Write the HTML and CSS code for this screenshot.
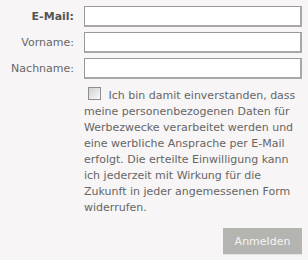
FILE: index.html
```html
<!DOCTYPE html>
<html lang="de">
<head>
  <meta charset="UTF-8" />
  <title>Newsletter</title>
  <link rel="stylesheet" href="styles.css">
</head>
<body>
  <form class="signup">
    <div class="row">
      <label for="email" class="required">E-Mail:</label>
      <input type="text" id="email" />
    </div>
    <div class="row">
      <label for="vorname">Vorname:</label>
      <input type="text" id="vorname" />
    </div>
    <div class="row">
      <label for="nachname">Nachname:</label>
      <input type="text" id="nachname" />
    </div>

    <div class="consent">
      <p><span class="box"></span> Ich bin damit einverstanden, dass meine personenbezogenen Daten für Werbezwecke verarbeitet werden und eine werbliche Ansprache per E-Mail erfolgt. Die erteilte Einwilligung kann ich jederzeit mit Wirkung für die Zukunft in jeder angemessenen Form widerrufen.</p>
    </div>

    <div class="actions">
      <button type="button">Anmelden</button>
    </div>
  </form>
</body>
</html>
```

FILE: styles.css
```css
body {
  margin: 0;
  background: #f7f5f5;
  font-family: "DejaVu Sans", Verdana, sans-serif;
  font-size: 11px;
  color: #666;
}

.signup {
  padding: 6px 6px 0 0;
}

.row {
  display: grid;
  grid-template-columns: 84px 1fr;
  align-items: center;
  margin-bottom: 5px;
}

.row label {
  text-align: right;
  padding-right: 10px;
  color: #676767;
}

.row label.required {
  font-weight: bold;
  color: #555;
}

.row input {
  height: 21px;
  box-sizing: border-box;
  border: 2px solid #a6a6a6;
  border-width: 1px 2px 2px 1px;
  border-color: #999 #a8a8a8 #a8a8a8 #999;
  background: #fff;
  margin: 0;
}

.consent {
  margin-left: 84px;
  padding-top: 3px;
}

.consent p {
  margin: 0;
  line-height: 16px;
}

.box {
  display: inline-block;
  width: 11px;
  height: 11px;
  margin: 0 4px 0 4px;
  border: 1px solid #8e8e8e;
  background: linear-gradient(135deg, #cfcfcf, #fafafa);
  vertical-align: -1px;
}

.actions {
  display: flex;
  justify-content: flex-end;
  margin-top: 12px;
}

.actions button {
  width: 79px;
  height: 27px;
  border: none;
  border-bottom: 1px solid #e2e2e2;
  background: #b4b5b1;
  color: #f4f4f4;
  font-family: inherit;
  font-size: 11px;
  padding: 0;
}
```
